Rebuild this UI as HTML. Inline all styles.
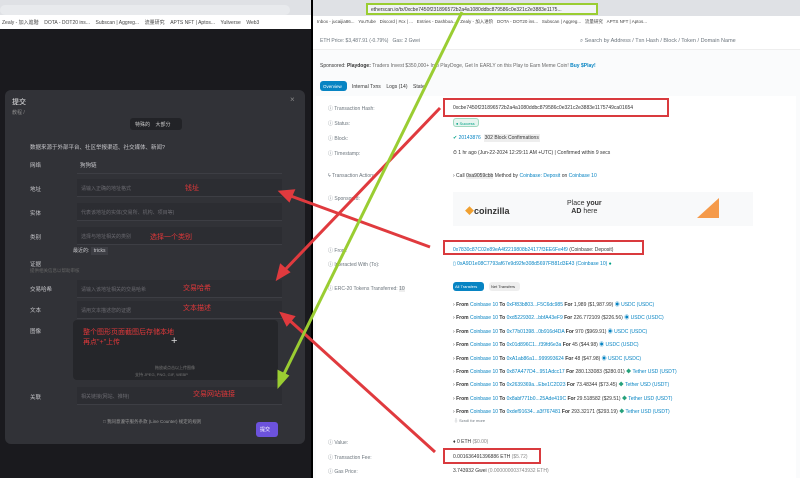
<!DOCTYPE html>
<html><head><meta charset="utf-8"><style>
*{margin:0;padding:0;box-sizing:border-box}
body{width:800px;height:478px;overflow:hidden;position:relative;background:#fff;font-family:"Liberation Sans","Noto Sans CJK SC",sans-serif}
.a{position:absolute;white-space:nowrap}
#L{position:absolute;left:0;top:0;width:312px;height:478px;background:#1a1a1e}
.dlg{position:absolute;left:5px;top:90px;width:300px;height:354px;background:#313237;border-radius:6px}
.lb{position:absolute;color:#c8c8cc;font-size:5.5px}
.in{position:absolute;left:72px;width:205px;height:18px;border-bottom:1px solid #3d3e44;color:#6a6a70;font-size:5px;padding:6px 4px}
.rd{position:absolute;color:#e0383a;font-size:7px}
.e{position:absolute;font-size:5px;color:#6c757d;white-space:nowrap}
.v{position:absolute;font-size:5px;color:#333;white-space:nowrap}
.lk{color:#0784c3}
.box{position:absolute;border:2px solid #d93a3e}
</style></head><body>
<div id="L">
 <div class="a" style="left:0;top:0;width:312px;height:15px;background:#dfe1e5"></div>
 <div class="a" style="left:0;top:5px;width:290px;height:10px;background:#e8eaed;border-radius:5px"></div>
 <div class="a" style="left:0;top:15px;width:312px;height:14px;background:#fff;font-size:5px;color:#444;padding:4px 2px">Zealy - 加入進階 &nbsp;&nbsp; DOTA - DOT20 ins... &nbsp;&nbsp; Subscan | Aggreg... &nbsp;&nbsp; 流量研究 &nbsp;&nbsp; APTS NFT | Aptos... &nbsp;&nbsp; Yuliverse &nbsp;&nbsp; Web3</div>
 <div class="dlg">
  <div class="a" style="left:7px;top:7px;color:#e8e8ea;font-size:7px">提交</div>
  <div class="a" style="left:7px;top:19px;color:#888;font-size:5px">教程 /</div>
  <div class="a" style="left:285px;top:5px;color:#888;font-size:8px">×</div>
  <div class="a" style="left:125px;top:28px;width:52px;height:12px;background:#222327;border-radius:3px;font-size:5px;color:#ccc;padding:3px 5px">特殊的 &nbsp;&nbsp; 大部分</div>
  <div class="a" style="left:25px;top:53px;color:#c8c8cc;font-size:5.5px">数据来源于外部平台、社区举报渠道、社交媒体、新闻?</div>
  <div class="lb" style="left:25px;top:71px">网络</div><div class="in" style="top:66px;color:#c8c8cc">&nbsp;&nbsp;&nbsp;&nbsp;&nbsp;&nbsp;&nbsp;&nbsp;&nbsp;&nbsp;&nbsp;&nbsp;&nbsp;&nbsp;&nbsp;&nbsp;&nbsp;&nbsp;</div>
  <div class="a" style="left:75px;top:71px;color:#c8c8cc;font-size:5.5px">狗狗链</div>
  <div class="lb" style="left:25px;top:95px">地址</div><div class="in" style="top:89px;background:#2c2d32">请输入正确的地址格式</div>
  <div class="lb" style="left:25px;top:119px">实体</div><div class="in" style="top:113px;background:#2c2d32">代表该地址的实体(交易所、机构、项目等)</div>
  <div class="lb" style="left:25px;top:143px">类别</div><div class="in" style="top:137px;background:#2c2d32">选择与地址相关的类别</div>
  <div class="a" style="left:68px;top:157px;color:#c8c8cc;font-size:5px">最近的: <span style="background:#3d3e44;padding:1px 3px">tricks</span></div>
  <div class="lb" style="left:25px;top:170px">证据</div>
  <div class="a" style="left:25px;top:178px;color:#666;font-size:4.5px">提供相关信息以帮助审核</div>
  <div class="lb" style="left:25px;top:195px">交易哈希</div><div class="in" style="top:190px;background:#2c2d32">请输入该地址相关的交易哈希</div>
  <div class="lb" style="left:25px;top:216px">文本</div><div class="in" style="top:211px;background:#2c2d32">请用文本描述您的证据</div>
  <div class="lb" style="left:25px;top:237px">图像</div>
  <div class="a" style="left:68px;top:230px;width:205px;height:60px;background:#25262a;border-radius:4px"></div>
  <div class="a" style="left:166px;top:245px;color:#ddd;font-size:11px">+</div>
  <div class="a" style="left:150px;top:275px;color:#777;font-size:4px">拖放或点击以上传图像</div>
  <div class="a" style="left:130px;top:282px;color:#777;font-size:4px">支持 JPEG, PNG, GIF, WEBP</div>
  <div class="lb" style="left:25px;top:303px">关联</div><div class="in" style="top:297px;background:#2c2d32">相关链接(网站、推特)</div>
  <div class="a" style="left:98px;top:329px;color:#999;font-size:4.5px">□ 我同意遵守服务条款 (Line Counter) 规定的规则</div>
  <div class="a" style="left:251px;top:332px;width:22px;height:15px;background:#6c52dc;border-radius:3px;color:#fff;font-size:5px;padding:4px 4px">提交</div>
 </div>
 <div class="rd" style="left:185px;top:183px">钱址</div>
 <div class="rd" style="left:150px;top:232px">选择一个类别</div>
 <div class="rd" style="left:183px;top:283px">交易哈希</div>
 <div class="rd" style="left:183px;top:303px">文本描述</div>
 <div class="rd" style="left:83px;top:328px;line-height:10px">整个图形页面截图后存储本地<br>再点"+"上传</div>
 <div class="rd" style="left:193px;top:389px">交易网站链接</div>
</div>
<div class="a" style="left:311px;top:0;width:2px;height:478px;background:#000"></div>
<!-- right -->
<div class="a" style="left:313px;top:0;width:487px;height:16px;background:#dfe1e5"></div>
<div class="a" style="left:366px;top:3px;width:232px;height:12px;background:#f1f3f4;border:2px solid #9acd32;font-size:5px;color:#333;padding:2px 3px">etherscan.io/tx/0xcbe7450f231896572b2a4a1080ddbc879586c0e321c2e3883e1175...</div>
<div class="a" style="left:313px;top:16px;width:487px;height:12px;background:#fff;font-size:4.5px;color:#444;padding:3px 4px">Inbox - jucaijia86... &nbsp; YouTube &nbsp; Discord | #cx | ... &nbsp; Entries - Dashboa... &nbsp; Zealy - 加入进阶 &nbsp; DOTA - DOT20 ins... &nbsp; Subscan | Aggreg... &nbsp; 流量研究 &nbsp; APTS NFT | Aptos...</div>
<div class="a" style="left:313px;top:28px;width:487px;height:22px;background:#fff;border-bottom:1px solid #eee"></div>
<div class="e" style="left:320px;top:38px">ETH Price: $3,487.91 (-0.79%) &nbsp; Gas: 2 Gwei</div>
<div class="e" style="left:580px;top:38px;font-size:5.5px">⌕ Search by Address / Txn Hash / Block / Token / Domain Name</div>
<div class="a" style="left:313px;top:50px;width:487px;height:428px;background:#fafbfc"></div>
<div class="v" style="left:320px;top:63px">Sponsored: <b>Playdoge:</b> <span style="color:#666">Traders Invest $350,000+ Into PlayDoge, Get In EARLY on this Play to Earn Meme Coin!</span> <b class="lk">Buy $Play!</b></div>
<div class="a" style="left:320px;top:81px;width:27px;height:10px;background:#0784c3;border-radius:3px;color:#fff;font-size:4.5px;padding:3px 3px">Overview</div>
<div class="e" style="left:352px;top:84px;color:#333">Internal Txns &nbsp;&nbsp; Logs (14) &nbsp;&nbsp; State</div>
<div class="a" style="left:316px;top:96px;width:480px;height:382px;background:#fff"></div>
<div class="e" style="left:328px;top:105px">ⓘ Transaction Hash:</div>
<div class="e" style="left:328px;top:120px">ⓘ Status:</div>
<div class="e" style="left:328px;top:135px">ⓘ Block:</div>
<div class="e" style="left:328px;top:150px">ⓘ Timestamp:</div>
<div class="e" style="left:328px;top:173px">ϟ Transaction Action:</div>
<div class="e" style="left:328px;top:195px">ⓘ Sponsored:</div>
<div class="v" style="left:453px;top:105px">0xcbe7450f231896572b2a4a1080ddbc879586c0e321c2e3883e1175749ca01654</div>
<div class="box" style="left:443px;top:98px;width:226px;height:19px"></div>
<div class="a" style="left:453px;top:118px;width:26px;height:9px;background:#e6f5ef;border:1px solid #9fd9c0;border-radius:3px;font-size:4px;color:#00a186;padding:2px">● Success</div>
<div class="v" style="left:453px;top:135px"><span style="color:#00a186">✔</span> <span class="lk">20143876</span> &nbsp;<span style="background:#eee;padding:1px">302 Block Confirmations</span></div>
<div class="v" style="left:453px;top:150px">⏱ 1 hr ago (Jun-22-2024 12:29:11 AM +UTC) | Confirmed within 9 secs</div>
<div class="v" style="left:453px;top:173px">› Call <span style="background:#eee">0xa9059cbb</span> Method by <span class="lk">Coinbase: Deposit</span> on <span class="lk">Coinbase 10</span></div>
<div class="a" style="left:453px;top:192px;width:300px;height:34px;background:#f8f9fa"></div>
<div class="a" style="left:465px;top:204px;font-size:9px;font-weight:bold;color:#333"><span style="color:#f0a030">◆</span>coinzilla</div>
<div class="a" style="left:567px;top:200px;font-size:7px;color:#333;line-height:8px;text-align:center">Place <b>your</b><br><b>AD</b> here</div>
<div class="a" style="left:697px;top:198px;width:0;height:0;border-top:20px solid transparent;border-right:22px solid #f59a4a"></div>
<div class="e" style="left:328px;top:247px">ⓘ From:</div>
<div class="e" style="left:328px;top:261px">ⓘ Interacted With (To):</div>
<div class="e" style="left:328px;top:285px">ⓘ ERC-20 Tokens Transferred: <span style="background:#eee">10</span></div>
<div class="v" style="left:453px;top:247px"><span class="lk">0x7830c87C02e89eA4f2219808b24177f3EE6Fe4f9</span> (Coinbase: Deposit)</div>
<div class="box" style="left:443px;top:240px;width:201px;height:15px"></div>
<div class="v lk" style="left:453px;top:261px">▯ 0xA9D1e08C7793af67e9d92fe308d5697FB81d3E43 (Coinbase 10) <span style="color:#00a186">●</span></div>
<div class="a" style="left:453px;top:282px;width:31px;height:9px;background:#0784c3;border-radius:3px;color:#fff;font-size:4px;padding:2px">All Transfers</div>
<div class="a" style="left:489px;top:282px;width:31px;height:9px;background:#eee;border-radius:3px;color:#333;font-size:4px;padding:2px">Net Transfers</div>
<div class="v" style="left:453px;top:299px;line-height:13.4px">
› <b>From</b> <span class="lk">Coinbase 10</span> <b>To</b> <span class="lk">0xFf83b803...F5C6dc985</span> <b>For</b> 1,989 ($1,987.99) <span class="lk">◉ USDC (USDC)</span><br>
› <b>From</b> <span class="lk">Coinbase 10</span> <b>To</b> <span class="lk">0xd5229302...bbfA43eF9</span> <b>For</b> 226.772109 ($226.56) <span class="lk">◉ USDC (USDC)</span><br>
› <b>From</b> <span class="lk">Coinbase 10</span> <b>To</b> <span class="lk">0x77b01398...0b916d4DA</span> <b>For</b> 970 ($969.91) <span class="lk">◉ USDC (USDC)</span><br>
› <b>From</b> <span class="lk">Coinbase 10</span> <b>To</b> <span class="lk">0x01d896C1...f39fd6e3a</span> <b>For</b> 45 ($44.98) <span class="lk">◉ USDC (USDC)</span><br>
› <b>From</b> <span class="lk">Coinbase 10</span> <b>To</b> <span class="lk">0xA1ab86a1...999993624</span> <b>For</b> 48 ($47.98) <span class="lk">◉ USDC (USDC)</span><br>
› <b>From</b> <span class="lk">Coinbase 10</span> <b>To</b> <span class="lk">0x87A477D4...951Adcc17</span> <b>For</b> 280.133083 ($280.01) <span style="color:#26a17b">◆</span> <span class="lk">Tether USD (USDT)</span><br>
› <b>From</b> <span class="lk">Coinbase 10</span> <b>To</b> <span class="lk">0x2639369a...Ebe1C2D23</span> <b>For</b> 73.48344 ($73.45) <span style="color:#26a17b">◆</span> <span class="lk">Tether USD (USDT)</span><br>
› <b>From</b> <span class="lk">Coinbase 10</span> <b>To</b> <span class="lk">0x8abf771b0...25Ade419C</span> <b>For</b> 29.518582 ($29.51) <span style="color:#26a17b">◆</span> <span class="lk">Tether USD (USDT)</span><br>
› <b>From</b> <span class="lk">Coinbase 10</span> <b>To</b> <span class="lk">0xdef91634...a3f767481</span> <b>For</b> 293.32171 ($293.19) <span style="color:#26a17b">◆</span> <span class="lk">Tether USD (USDT)</span></div>
<div class="e" style="left:454px;top:418px;font-size:4px">⇩ Scroll for more</div>
<div class="e" style="left:328px;top:439px">ⓘ Value:</div>
<div class="e" style="left:328px;top:454px">ⓘ Transaction Fee:</div>
<div class="e" style="left:328px;top:468px">ⓘ Gas Price:</div>
<div class="v" style="left:453px;top:439px">♦ 0 ETH <span style="color:#888">($0.00)</span></div>
<div class="v" style="left:453px;top:454px">0.001636491396886 ETH <span style="color:#888">($5.72)</span></div>
<div class="box" style="left:443px;top:448px;width:98px;height:16px"></div>
<div class="v" style="left:453px;top:468px">3.743932 Gwei <span style="color:#888">(0.000000003743932 ETH)</span></div>
<svg class="a" style="left:0;top:0" width="800" height="478">
 <g stroke="#e03a3e" stroke-width="3" fill="#e03a3e">
  <line x1="430" y1="247" x2="288" y2="195"/>
  <polygon points="281,192 293,191 289,200"/>
  <line x1="440" y1="108" x2="281" y2="274"/>
  <polygon points="278,278 281,266 288,272"/>
  <line x1="435" y1="452" x2="287" y2="318"/>
  <polygon points="282,314 293,317 287,324"/>
 </g>
 <g stroke="#9acd32" stroke-width="3" fill="#9acd32">
  <line x1="462" y1="12" x2="282" y2="378"/>
  <polygon points="279,385 279,372 287,376"/>
 </g>
</svg>
</body></html>
